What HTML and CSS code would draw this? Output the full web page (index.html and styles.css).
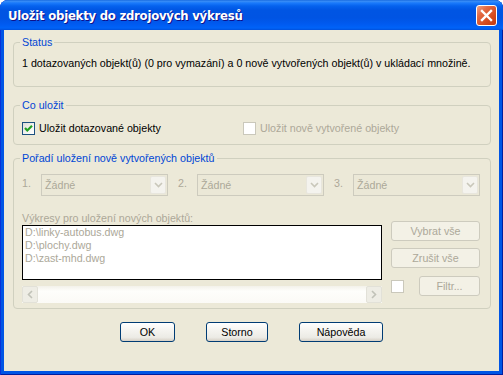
FILE: index.html
```html
<!DOCTYPE html>
<html lang="cs">
<head>
    <meta charset="UTF-8">
    <title>Uložit objekty do zdrojových výkresů</title>
    <link rel="stylesheet" href="styles.css">
</head>
<body>
    <div class="window">
        <div class="titlebar">
            <span class="title">Uložit objekty do zdrojových výkresů</span>
            <span class="close">
                <svg width="13" height="13" viewBox="0 0 13 13"><path d="M2 2 L11 11 M11 2 L2 11" stroke="#fff" stroke-width="2.4" stroke-linecap="square"/></svg>
            </span>
        </div>

        <div class="content">
            <fieldset class="group status">
                <legend>Status</legend>
                <p>1 dotazovaných objekt(ů) (0 pro vymazání) a 0 nově vytvořených objekt(ů) v ukládací množině.</p>
            </fieldset>

            <fieldset class="group save">
                <legend>Co uložit</legend>
                <div class="checks">
                    <label class="check">
                        <span class="box checked">
                            <svg width="11" height="11" viewBox="0 0 11 11"><path d="M2 5 L4.3 7.5 L9 2.8" fill="none" stroke="#21a121" stroke-width="2.2"/></svg>
                        </span>
                        Uložit dotazované objekty
                    </label>
                    <label class="check disabled">
                        <span class="box"></span>
                        Uložit nově vytvořené objekty
                    </label>
                </div>
            </fieldset>

            <fieldset class="group order">
                <legend>Pořadí uložení nově vytvořených objektů</legend>
                <div class="picks">
                    <div class="pick">
                        <span class="num">1.</span>
                        <div class="combo">Žádné<span class="drop"><svg width="9" height="6" viewBox="0 0 9 6"><path d="M1 1 L4.5 4.5 L8 1" fill="none" stroke="#c9c7ba" stroke-width="1.6"/></svg></span></div>
                    </div>
                    <div class="pick">
                        <span class="num">2.</span>
                        <div class="combo">Žádné<span class="drop"><svg width="9" height="6" viewBox="0 0 9 6"><path d="M1 1 L4.5 4.5 L8 1" fill="none" stroke="#c9c7ba" stroke-width="1.6"/></svg></span></div>
                    </div>
                    <div class="pick">
                        <span class="num">3.</span>
                        <div class="combo">Žádné<span class="drop"><svg width="9" height="6" viewBox="0 0 9 6"><path d="M1 1 L4.5 4.5 L8 1" fill="none" stroke="#c9c7ba" stroke-width="1.6"/></svg></span></div>
                    </div>
                </div>

                <div class="files">
                    <div class="files-main">
                        <div class="caption">Výkresy pro uložení nových objektů:</div>
                        <div class="list">
                            <div>D:\linky-autobus.dwg</div>
                            <div>D:\plochy.dwg</div>
                            <div>D:\zast-mhd.dwg</div>
                        </div>
                        <div class="hscroll">
                            <span class="arrow"><svg width="6" height="9" viewBox="0 0 6 9"><path d="M5 1 L1.5 4.5 L5 8" fill="none" stroke="#c1c2b8" stroke-width="1.6"/></svg></span>
                            <span class="track"></span>
                            <span class="arrow"><svg width="6" height="9" viewBox="0 0 6 9"><path d="M1 1 L4.5 4.5 L1 8" fill="none" stroke="#c1c2b8" stroke-width="1.6"/></svg></span>
                        </div>
                    </div>
                    <div class="files-side">
                        <span class="btn off">Vybrat vše</span>
                        <span class="btn off">Zrušit vše</span>
                        <div class="filter-row">
                            <span class="box"></span>
                            <span class="btn off filter">Filtr...</span>
                        </div>
                    </div>
                </div>
            </fieldset>

            <div class="actions">
                <span class="btn ok">OK</span>
                <span class="btn cancel">Storno</span>
                <span class="btn help">Nápověda</span>
            </div>
        </div>
    </div>
</body>
</html>
```

FILE: styles.css
```css
* {
    box-sizing: border-box;
}
body {
    margin: 0;
    padding: 0;
    background: #fff;
    font-family: "Liberation Sans", Arial, sans-serif;
    font-size: 10.7px;
    color: #000;
}
.window {
    width: 503px;
    height: 375px;
    display: flex;
    flex-direction: column;
    background: #0055e5;
    border-radius: 8px 8px 0 0;
    box-shadow: inset 1px 0 #0831d9, inset -1px 0 #001ea0, inset 0 -1px #001ea0;
}
.titlebar {
    height: 30px;
    flex: none;
    display: flex;
    align-items: center;
    justify-content: space-between;
    padding: 0 6px 0 8px;
    border-radius: 8px 8px 0 0;
    background: linear-gradient(to bottom, #0a5fdb 0, #3d8ff5 1px, #1a7afb 3px, #0562ee 6px, #0055e3 10px, #0054e3 18px, #005af0 24px, #0063f8 28px, #0050dc 30px);
}
.title {
    color: #fff;
    font-family: "DejaVu Sans Condensed", "Liberation Sans", sans-serif;
    font-weight: bold;
    font-size: 13px;
    letter-spacing: -0.25px;
    text-shadow: 1px 1px #0f1089;
    margin-top: 1px;
}
.close {
    width: 21px;
    height: 21px;
    display: flex;
    align-items: center;
    justify-content: center;
    border: 1px solid #fff;
    border-radius: 3px;
    background: linear-gradient(135deg, #f0a282 0, #e46a43 30%, #d4491c 70%, #c23a12 100%);
    margin-top: 1px;
}
.content {
    flex: 1;
    margin: 0 4px 4px;
    background: #ece9d8;
    padding-top: 6px;
}
.group {
    margin: 0 8px 0 9px;
    padding: 0 8px 0 8px;
    border: 1px solid #d0d0bf;
    border-radius: 4px;
}
.group legend {
    padding: 0 2px;
    margin-left: -2px;
    line-height: 13px;
    color: #0046d5;
}
.status p {
    margin: 0;
    padding: 8px 0 16px;
    line-height: 13px;
    white-space: nowrap;
}
.save {
    margin-top: 12px;
    padding-top: 10px;
    padding-bottom: 9px;
}
.checks {
    display: grid;
    grid-template-columns: 221px auto;
}
.check {
    display: flex;
    align-items: center;
    gap: 4px;
    line-height: 13px;
}
.check.disabled {
    color: #aca899;
}
.box {
    width: 13px;
    height: 13px;
    flex: none;
    display: flex;
    align-items: center;
    justify-content: center;
    border: 1px solid #cac8bb;
    background: #fff;
}
.box.checked {
    border-color: #1c5180;
    background: linear-gradient(135deg, #dcdcd7 0, #f5f5f2 60%, #fff 100%);
}
.order {
    margin-top: 7px;
    padding-top: 9px;
    padding-bottom: 5px;
    padding-right: 10px;
}
.picks {
    display: flex;
    gap: 10px;
}
.pick {
    flex: 1;
    display: flex;
}
.num {
    width: 19px;
    flex: none;
    color: #aca899;
    line-height: 13px;
    padding-top: 3px;
}
.combo {
    flex: 1;
    height: 22px;
    display: flex;
    align-items: center;
    justify-content: space-between;
    padding: 0 1px 0 3px;
    border: 1px solid #cdcbbe;
    background: #ebe8d7;
    color: #aca899;
}
.drop {
    width: 16px;
    height: 18px;
    display: flex;
    align-items: center;
    justify-content: center;
    background: #f4f3ee;
    border: 1px solid #e8e6dd;
    border-radius: 2px;
}
.files {
    display: flex;
    gap: 9px;
    margin-top: 16px;
}
.files-main {
    width: 360px;
    flex: none;
}
.caption {
    line-height: 13px;
    color: #aca899;
}
.list {
    height: 55px;
    border: 1px solid #000;
    background: #fff;
    padding: 0 2px;
    color: #aca899;
    line-height: 13px;
}
.hscroll {
    display: flex;
    height: 17px;
    margin-top: 6px;
    background: linear-gradient(to bottom, #f3f1ea 0, #fefefb 30%, #fbfaf6 100%);
}
.hscroll .track {
    flex: 1;
}
.hscroll .arrow {
    width: 16px;
    height: 17px;
    display: flex;
    align-items: center;
    justify-content: center;
    background: #eeede5;
    border: 1px solid #e2e1d8;
    border-radius: 2px;
}
.files-side {
    flex: 1;
    display: flex;
    flex-direction: column;
    gap: 7px;
    padding-top: 9px;
}
.btn {
    display: flex;
    align-items: center;
    justify-content: center;
    height: 20px;
    border: 1px solid #003c74;
    border-radius: 3px;
    background: linear-gradient(to bottom, #fff 0, #f5f4f0 40%, #ecebe5 80%, #d6d0c5 100%);
}
.btn.off {
    border-color: #cdcbbe;
    background: #f3f1e6;
    color: #aca899;
}
.filter-row {
    display: flex;
    align-items: center;
    justify-content: space-between;
    margin-top: 1px;
}
.filter {
    width: 61px;
}
.actions {
    display: flex;
    justify-content: center;
    gap: 31px;
    margin-top: 13px;
}
.ok {
    width: 55px;
}
.cancel {
    width: 62px;
}
.help {
    width: 84px;
}
```
